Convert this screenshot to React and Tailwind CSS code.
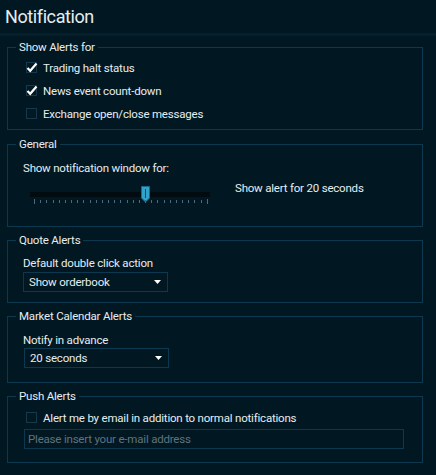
import { useState } from "react";

const font = { fontFamily: "Roboto, 'Liberation Sans', sans-serif" };
const text = "text-[11.5px] tracking-[-0.2px] leading-[14px] text-[#e6edf1]";

function Check({ checked, onChange, label, className = "h-[23px]" }) {
  return (
    <label className={`flex cursor-pointer items-center pl-[3px] ${className}`} onClick={onChange}>
      <svg width="12" height="12" viewBox="0 0 12 12" className="shrink-0">
        <rect x="0.5" y="0.5" width="10" height="10" fill="#021822" stroke="#17384a" />
        {checked && (
          <path d="M1.5 6 L4.2 8.8 L10.5 1.5" fill="none" stroke="#ffffff" strokeWidth="2.2" />
        )}
      </svg>
      <span className={`ml-[5px] ${text}`}>{label}</span>
    </label>
  );
}

function Group({ title, className, children }) {
  return (
    <fieldset className={`ml-[7px] w-[416px] border border-[#0c3850] pl-[15px] ${className}`}>
      <legend className={`-ml-[7px] px-[3px] ${text}`}>{title}</legend>
      {children}
    </fieldset>
  );
}

function Select({ value, className }) {
  return (
    <div
      className={`flex h-[20px] w-[145px] items-center justify-between border border-[#0c3850] pl-[5px] pr-[6px] ${text} ${className}`}
    >
      <span>{value}</span>
      <svg width="7" height="4" viewBox="0 0 7 4">
        <path d="M0 0 H7 L3.5 4 Z" fill="#ffffff" />
      </svg>
    </div>
  );
}

function Slider() {
  const ticks = Array.from({ length: 29 });
  return (
    <div className="relative ml-[7px] h-[18px] w-[180px]">
      <div className="absolute left-0 top-[6px] h-[5px] w-[180px] bg-[#010b10]" />
      <svg width="9" height="17" viewBox="0 0 9 17" className="absolute left-[111px] top-0">
        <path d="M0.5 0.5 H8.5 V12 L4.5 16 L0.5 12 Z" fill="#2fa3cc" stroke="#176a8c" />
        <path d="M4.5 3 V12" stroke="#0f4d68" strokeWidth="1" />
      </svg>
      <div className="absolute left-[4px] top-[13px] flex w-[174px] justify-between">
        {ticks.map((_, i) => (
          <div
            key={i}
            className={
              i === 0 || i === ticks.length - 1
                ? "mt-0 h-[5px] w-px bg-[#4e6b7e]"
                : "mt-[1px] h-[3px] w-px bg-[#4e6b7e]"
            }
          />
        ))}
      </div>
    </div>
  );
}

export default function App() {
  const [halt, setHalt] = useState(true);
  const [news, setNews] = useState(true);
  const [exchange, setExchange] = useState(false);
  const [email, setEmail] = useState(false);

  return (
    <div className="h-[475px] w-[436px] overflow-hidden bg-[#011822]" style={font}>
      <div className="flex h-[33px] items-center pl-[5px] text-[18px] tracking-[-0.4px] text-[#e6edf1]">
        Notification
      </div>
      <div className="h-[3px] bg-[#03202c]" />

      <Group title="Show Alerts for" className="mt-[4px] pb-[4px] pt-[2px]">
        <Check checked={halt} onChange={() => setHalt(!halt)} label="Trading halt status" />
        <Check checked={news} onChange={() => setNews(!news)} label="News event count-down" />
        <Check checked={exchange} onChange={() => setExchange(!exchange)} label="Exchange open/close messages" />
      </Group>

      <Group title="General" className="mt-[7px] pb-[22px] pt-[10px]">
        <div className={text}>Show notification window for:</div>
        <div className="mt-[6px] flex">
          <div className="pt-[5px]">
            <Slider />
          </div>
          <div className={`ml-[25px] ${text}`}>Show alert for 20 seconds</div>
        </div>
      </Group>

      <Group title="Quote Alerts" className="mt-[6px] pb-[10px] pt-[9px]">
        <div className={text}>Default double click action</div>
        <Select value="Show orderbook" className="mt-[2px]" />
      </Group>

      <Group title="Market Calendar Alerts" className="mt-[6px] pb-[14px] pt-[10px]">
        <div className={text}>Notify in advance</div>
        <Select value="20 seconds" className="ml-[1px] mt-[1px]" />
      </Group>

      <Group title="Push Alerts" className="mt-[6px] pb-[12px] pt-[8px]">
        <Check
          checked={email}
          onChange={() => setEmail(!email)}
          label="Alert me by email in addition to normal notifications"
          className="h-[14px]"
        />
        <input
          type="text"
          placeholder="Please insert your e-mail address"
          className={`ml-[1px] mt-[4px] h-[20px] w-[380px] border border-[#0c3850] bg-transparent px-[3px] outline-none placeholder:text-[#5f737e] ${text}`}
        />
      </Group>
    </div>
  );
}
